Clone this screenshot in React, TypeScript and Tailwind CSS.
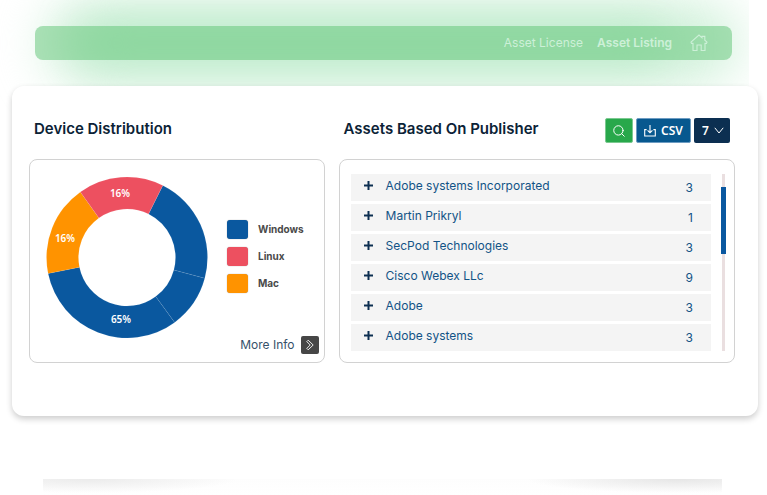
import { useState } from "react";
import { Search } from "lucide-react";

interface Publisher {
  name: string;
  count: number;
}

const publishers: Publisher[] = [
  { name: "Adobe systems Incorporated", count: 3 },
  { name: "Martin Prikryl", count: 1 },
  { name: "SecPod Technologies", count: 3 },
  { name: "Cisco Webex LLc", count: 9 },
  { name: "Adobe", count: 3 },
  { name: "Adobe systems", count: 3 },
];

const legend = [
  { label: "Windows", color: "bg-[#0a589f]" },
  { label: "Linux", color: "bg-[#ed5060]" },
  { label: "Mac", color: "bg-[#ff9300]" },
];

// angles in degrees, clockwise from the top
const slices = [
  { from: 26.4, to: 105, fill: "#0a589f" },
  { from: 105, to: 143.7, fill: "#0a589f" },
  { from: 143.7, to: 258.5, fill: "#0a589f" },
  { from: 258.5, to: 324.6, fill: "#ff9300" },
  { from: 324.6, to: 386.4, fill: "#ed5060" },
];

function point(angle: number, r: number) {
  const rad = (angle * Math.PI) / 180;
  return `${81 + r * Math.sin(rad)} ${81.5 - r * Math.cos(rad)}`;
}

function slicePath(from: number, to: number) {
  return `M${point(from, 80.5)} A80.5 80.5 0 0 1 ${point(to, 80.5)} L${point(to, 48.5)} A48.5 48.5 0 0 0 ${point(from, 48.5)} Z`;
}

function Donut() {
  return (
    <svg width="162" height="162" viewBox="0 0 162 162" role="img" aria-label="Device Distribution">
      {slices.map((s) => (
        <path
          key={s.from}
          d={slicePath(s.from, s.to)}
          fill={s.fill}
          stroke="#fff"
          strokeOpacity="0.2"
          strokeWidth="0.4"
        />
      ))}
      <g
        fill="#fff"
        textAnchor="middle"
        className="font-['Noto_Sans',sans-serif] text-[10px] font-semibold"
      >
        <text x="74" y="21">16%</text>
        <text x="19" y="66">16%</text>
        <text x="75" y="147">65%</text>
      </g>
    </svg>
  );
}

function HomeIcon() {
  return (
    <svg width="18" height="18" viewBox="0 0 18 18" fill="none" stroke="currentColor" strokeWidth="1.1">
      <path d="M1.6 9.4 L1 8.2 L9 1 L12 3.8 V2.4 H14.8 V6.2 L17 8.2 L16.4 9.4 H15 V16.5 H11.2 V11 H7 V16.5 H3 V9.4 Z" />
    </svg>
  );
}

function DownloadIcon() {
  return (
    <svg width="12" height="12" viewBox="0 0 12 12" fill="none" stroke="currentColor" strokeWidth="1.1">
      <path d="M2.6 4.6 H0.7 V11 H11.3 V4.6 H9.4" />
      <path d="M6 0 V7.6 M3.6 5.4 L6 7.8 L8.4 5.4" />
    </svg>
  );
}

export default function App() {
  const [pageSize, setPageSize] = useState("7");

  return (
    <div className="font-[Inter,sans-serif] text-[#0b2236]">
      {/* Header */}
      <header className="relative mr-[18px] overflow-x-clip pt-[26px] pr-[17px] pl-[35px]">
        <div className="absolute top-0 right-2 left-11 h-[86px] rounded-[43px] bg-[#d4f2dd] blur-[24px]" />
        <div className="absolute inset-x-20 top-5 h-[46px] rounded-[23px] bg-[#bdebcb] blur-[20px]" />
        <nav className="relative flex h-[34px] items-center justify-end rounded-lg bg-[#5ec373]/50 pr-6 text-xs text-[#cdf0d8]">
          <a href="#license" className="mr-3.5">Asset License</a>
          <a href="#listing" className="mr-[18px] font-semibold">Asset Listing</a>
          <a href="#home" aria-label="Home">
            <HomeIcon />
          </a>
        </nav>
      </header>

      <main className="relative mt-[26px] mr-[9px] ml-3 grid grid-cols-[296fr_397fr] gap-x-3.5 rounded-xl bg-white pt-8 pr-[23px] pb-[53px] pl-[17px] shadow-[0_3px_6px_rgba(0,0,0,0.2)]">
        {/* Device distribution */}
        <section className="flex min-w-0 flex-col">
          <h2 className="flex h-[25px] items-center pb-0.5 pl-[5px] text-[15px] font-semibold">Device Distribution</h2>
          <div className="mt-4 flex flex-1 flex-col rounded-lg border border-[#d2d2d2]">
            <div className="flex pt-4 pl-4">
              <Donut />
              <ul className="mt-11 ml-[19px] flex flex-col gap-2 text-[10px] font-bold text-[#4a4a4a]">
                {legend.map((item) => (
                  <li key={item.label} className="flex h-[19px] items-center gap-2.5">
                    <span className={`h-[19px] w-[21px] rounded-[3px] shadow-[0_0_1px_#888] ${item.color}`} />
                    {item.label}
                  </li>
                ))}
              </ul>
            </div>
            <a href="#more" className="-mt-0.5 mr-[5px] flex items-center justify-end gap-1.5 text-xs text-[#37516a]">
              More Info
              <span className="flex size-[18px] items-center justify-center rounded-xs bg-[#464646] text-white">
                <svg width="10" height="12" viewBox="0 0 10 12" fill="none" stroke="currentColor" strokeWidth="0.9">
                  <path d="M1.8 2.6 L3.2 1.2 L8.2 6 L3.2 10.8 L1.8 9.4 L5.2 6 Z" />
                </svg>
              </span>
            </a>
          </div>
        </section>

        {/* Publishers */}
        <section className="flex min-w-0 flex-col">
          <div className="flex items-center justify-between pr-[5px] pl-[5px]">
            <h2 className="pb-0.5 text-[15px] font-semibold">Assets Based On Publisher</h2>
            <div className="flex h-[25px] gap-[3px] font-['Noto_Sans',sans-serif] text-xs font-semibold text-white">
              <button
                aria-label="Search"
                className="flex w-7 items-center justify-center rounded-xs border border-[#7bc990] bg-[#28a84b]"
              >
                <Search size={14} strokeWidth={1.7} />
              </button>
              <button className="flex w-[55px] items-center justify-center gap-[5px] rounded-xs border border-[#6d9cc2] bg-[#07588f]">
                <DownloadIcon />
                CSV
              </button>
              <div className="relative w-9">
                <select
                  aria-label="Rows"
                  value={pageSize}
                  onChange={(e) => setPageSize(e.target.value)}
                  className="size-full appearance-none rounded-xs bg-[#0c2f51] pl-2"
                >
                  <option>7</option>
                  <option>15</option>
                  <option>30</option>
                </select>
                <svg
                  width="10"
                  height="7"
                  viewBox="0 0 10 7"
                  fill="none"
                  stroke="currentColor"
                  className="pointer-events-none absolute top-[9px] right-1.5"
                >
                  <path d="M0.8 0.8 L5 6 L9.2 0.8" />
                </svg>
              </div>
            </div>
          </div>

          <div className="mt-4 flex rounded-lg border border-[#d2d2d2] pt-3.5 pr-2 pb-[11px] pl-[11px]">
            <table className="flex-1 text-xs text-[#125386]">
              <tbody className="block w-full space-y-[3px]">
                {publishers.map((p) => (
                  <tr key={p.name} className="flex h-[27px] bg-[#f4f4f4]">
                    <td className="w-[35px] pt-[7px] pl-[13px]">
                      <button aria-label={`Expand ${p.name}`} className="block text-[#0c2f51]">
                        <svg width="9" height="9" viewBox="0 0 9 9" fill="currentColor">
                          <path d="M3.5 0h2v3.5H9v2H5.5V9h-2V5.5H0v-2h3.5z" />
                        </svg>
                      </button>
                    </td>
                    <td className="flex-1 pt-1 leading-4">{p.name}</td>
                    <td className="pt-1.5 pr-[18px] leading-4">{p.count}</td>
                  </tr>
                ))}
              </tbody>
            </table>
            <div className="ml-2.5 flex w-[5px] justify-center bg-[linear-gradient(#eadfe0,#eadfe0)] bg-[length:3px_100%] bg-center bg-no-repeat">
              <div className="mt-[13px] h-[67px] w-[5px] bg-[#0a58a0]" />
            </div>
          </div>
        </section>
      </main>

      {/* Curled shadow under the page */}
      <div className="mt-[63px] mr-[45px] ml-[43px] h-4 bg-[radial-gradient(ellipse_150px_14px_at_45px_0,#ebebeb,transparent),radial-gradient(ellipse_150px_14px_at_calc(100%_-_45px)_0,#e6e6e6,transparent),linear-gradient(#fdfdfd,#ffffff)]" />
    </div>
  );
}
